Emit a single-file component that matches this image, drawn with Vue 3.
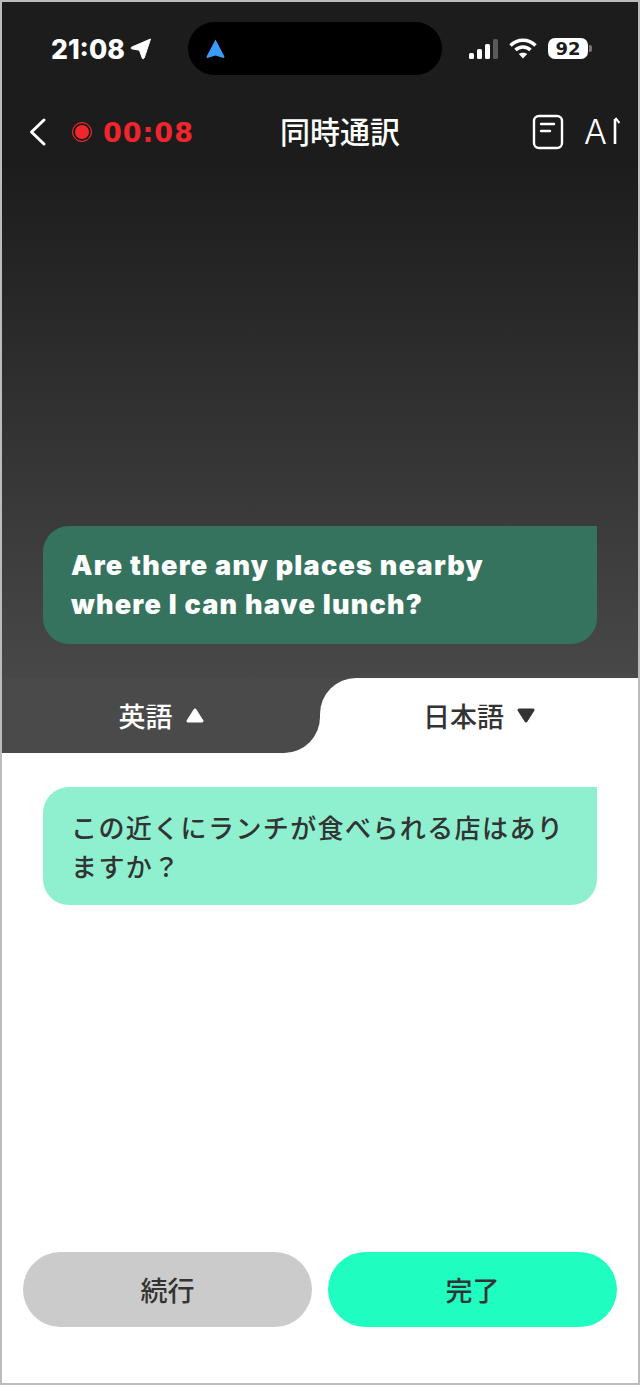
<script setup>
const signalBars = [6, 10, 15, 20];
</script>

<template>
  <div class="frame">
    <div class="dark">
      <div class="status">
        <div class="clock">
          <span>21:08</span>
          <svg width="22" height="22" viewBox="0 0 22 22">
            <path d="M20.5 1 L1.5 9.2 Q0.5 10.2 1.6 10.8 L9.4 12.2 L12.4 20.4 Q13.4 21.4 14.2 20 Z" fill="#fff" stroke="#fff" stroke-linejoin="round" />
          </svg>
        </div>
        <div class="island">
          <svg width="19" height="20" viewBox="0 0 19 20">
            <path d="M9.5 0.5 L18.4 17.6 Q18.6 19.4 16.8 18.8 L9.5 16.6 L2.2 18.8 Q0.4 19.4 0.6 17.6 Z" fill="#3a9bfa" />
          </svg>
        </div>
        <div class="indicators">
          <div class="signal">
            <i v-for="(h, n) in signalBars" :key="n" :class="{ off: n === 3 }" :style="{ height: h + 'px' }"></i>
          </div>
          <svg width="28" height="21" viewBox="0 0 28 21" fill="none" stroke="#fff" stroke-width="3.4">
            <path d="M1.5 7.5 C8.5 0.5 19.5 0.5 26.5 7.5" />
            <path d="M6.5 12 C10.5 8 17.5 8 21.5 12" />
            <path d="M14 20.5 L9.8 16 C12 14.2 16 14.2 18.2 16 Z" fill="#fff" stroke="none" />
          </svg>
          <div class="battery">
            <span class="battery-body">92</span>
            <i class="battery-cap"></i>
          </div>
        </div>
      </div>

      <nav class="nav">
        <div class="nav-left">
          <svg class="back" width="20" height="30" viewBox="0 0 20 30" fill="none" stroke="#fff" stroke-width="3" stroke-linecap="round" stroke-linejoin="round">
            <path d="M16 3 L3.5 15 L16 27" />
          </svg>
          <div class="rec">
            <span class="rec-dot"></span>
            <span class="rec-time">00:08</span>
          </div>
        </div>
        <div class="title">同時通訳</div>
        <div class="tools">
          <svg width="32" height="36" viewBox="0 0 32 36" fill="none" stroke="#fff" stroke-width="2.4" stroke-linecap="round">
            <rect x="2" y="2" width="28" height="32" rx="5" />
            <path d="M9 10 H22" />
            <path d="M9 17 H18" />
          </svg>
          <div class="ai">
            <span>A</span>
            <svg width="7" height="28" viewBox="0 0 7 28" fill="none" stroke="#fff" stroke-width="2.6">
              <path d="M2 2 V27" />
              <path d="M2.4 1 L6.5 6" stroke-width="2" />
            </svg>
          </div>
        </div>
      </nav>

      <div class="stage">
        <div class="bubble bubble-dark">Are there any places nearby where I can have lunch?</div>
      </div>
    </div>

    <div class="tabs">
      <div class="tab tab-left">
        <span>英語</span>
        <svg width="18" height="15" viewBox="0 0 18 15"><path d="M9 2 L16 13 H2 Z" fill="#fff" stroke="#fff" stroke-width="3" stroke-linejoin="round" /></svg>
      </div>
      <div class="tab-back">
        <div class="tab tab-right">
          <span>日本語</span>
          <svg width="18" height="15" viewBox="0 0 18 15"><path d="M9 13 L16 2 H2 Z" fill="#333" stroke="#333" stroke-width="3" stroke-linejoin="round" /></svg>
        </div>
      </div>
    </div>

    <div class="light">
      <div class="bubble bubble-light">この近くにランチが食べられる店はありますか？</div>
      <div class="actions">
        <button class="btn btn-gray">続行</button>
        <button class="btn btn-green">完了</button>
      </div>
    </div>
  </div>
</template>

<style>
html,
body {
  margin: 0;
  background: #fff;
}
</style>

<style scoped>
.frame {
  box-sizing: border-box;
  width: 640px;
  height: 1385px;
  border: 2px solid #bcbcbc;
  display: flex;
  flex-direction: column;
  background: #fff;
  font-family: "Noto Sans CJK JP", sans-serif;
  overflow: hidden;
}

.dark {
  height: 676px;
  display: flex;
  flex-direction: column;
  background: linear-gradient(#1c1c1c 0, #1c1c1c 160px, #484848 100%);
}

.status {
  display: flex;
  align-items: center;
  height: 53px;
  margin-top: 20px;
  padding-left: 49px;
}

.clock {
  width: 137px;
  display: flex;
  align-items: center;
  gap: 5px;
  font: 800 26.5px "Inter", sans-serif;
  color: #fff;
}

.island {
  width: 254px;
  height: 53px;
  border-radius: 27px;
  background: #000;
  display: flex;
  align-items: center;
  padding-left: 18px;
  box-sizing: border-box;
}

.indicators {
  display: flex;
  align-items: center;
  margin-left: 27px;
  gap: 11px;
}

.signal {
  display: flex;
  align-items: flex-end;
  gap: 3px;
}

.signal i {
  width: 5px;
  border-radius: 1.5px;
  background: #fff;
}

.signal i.off {
  background: #5a5a5a;
}

.battery {
  display: flex;
  align-items: center;
  gap: 1px;
}

.battery-body {
  width: 40px;
  height: 21px;
  border-radius: 7px;
  background: #fff;
  color: #1c1c1c;
  font: 700 18px/21px "DejaVu Sans", sans-serif;
  text-align: center;
}

.battery-cap {
  width: 3px;
  height: 7px;
  border-radius: 0 2px 2px 0;
  background: #777;
}

.nav {
  display: grid;
  grid-template-columns: 252px auto 1fr;
  align-items: center;
  height: 60px;
  margin-top: 27px;
  padding-left: 26px;
}

.nav-left {
  display: flex;
  align-items: center;
}

.back {
  flex: none;
}

.rec {
  display: flex;
  align-items: center;
  gap: 11px;
  margin-left: 24px;
}

.rec-dot {
  box-sizing: border-box;
  width: 20px;
  height: 20px;
  border-radius: 50%;
  border: 1px solid #f1252c;
  background: #f1252c;
  box-shadow: inset 0 0 0 2px #1c1c1c;
}

.rec-time {
  font: 700 27px "DejaVu Sans", sans-serif;
  letter-spacing: 1px;
  color: #f1252c;
}

.title {
  font-size: 30px;
  line-height: 40px;
  font-weight: 500;
  color: #fff;
  padding-bottom: 5px;
}

.tools {
  display: flex;
  align-items: center;
  justify-content: flex-end;
  gap: 21px;
  margin-right: 18px;
}

.ai {
  display: flex;
  align-items: flex-start;
  gap: 6px;
  width: 35px;
  height: 30px;
  color: #fff;
  font: 300 34px/30px "Inter", sans-serif;
}

.ai span {
  margin-left: -1px;
}

.stage {
  flex: 1;
  display: flex;
  flex-direction: column;
  justify-content: flex-end;
  padding: 0 41px 34px;
}

.bubble {
  box-sizing: border-box;
  height: 118px;
  padding: 20px 28px;
  border-radius: 26px 0 26px 26px;
  font-size: 26px;
  line-height: 39px;
  letter-spacing: 0.6px;
}

.bubble-dark {
  background: #36735f;
  color: #fff;
  font-family: "Inter", sans-serif;
  font-size: 27px;
  font-weight: 900;
  letter-spacing: 1.25px;
  padding-right: 60px;
}

.bubble-light {
  background: #8ef0cf;
  color: #333;
  font-weight: 500;
  margin: 34px 41px 0;
  letter-spacing: 1.4px;
}

.tabs {
  display: grid;
  grid-template-columns: 318px 1fr;
  height: 75px;
}

.tab {
  display: flex;
  align-items: center;
  justify-content: center;
  gap: 13px;
  font-size: 27px;
  font-weight: 500;
  height: 75px;
}

.tab-left {
  background: #4a4a4a;
  color: #fff;
  border-bottom-right-radius: 36px;
}

.tab-back {
  background: #4a4a4a;
}

.tab-right {
  background: #fff;
  color: #333;
  border-top-left-radius: 36px;
}

.light {
  flex: 1;
  display: flex;
  flex-direction: column;
}

.actions {
  display: flex;
  gap: 16px;
  margin-top: auto;
  padding: 0 21px 56px;
}

.btn {
  flex: 1;
  height: 75px;
  border: none;
  border-radius: 38px;
  font: 500 27px "Noto Sans CJK JP", sans-serif;
  color: #333;
}

.btn-gray {
  background: #cbcbcb;
}

.btn-green {
  background: #1ffdc0;
}
</style>
